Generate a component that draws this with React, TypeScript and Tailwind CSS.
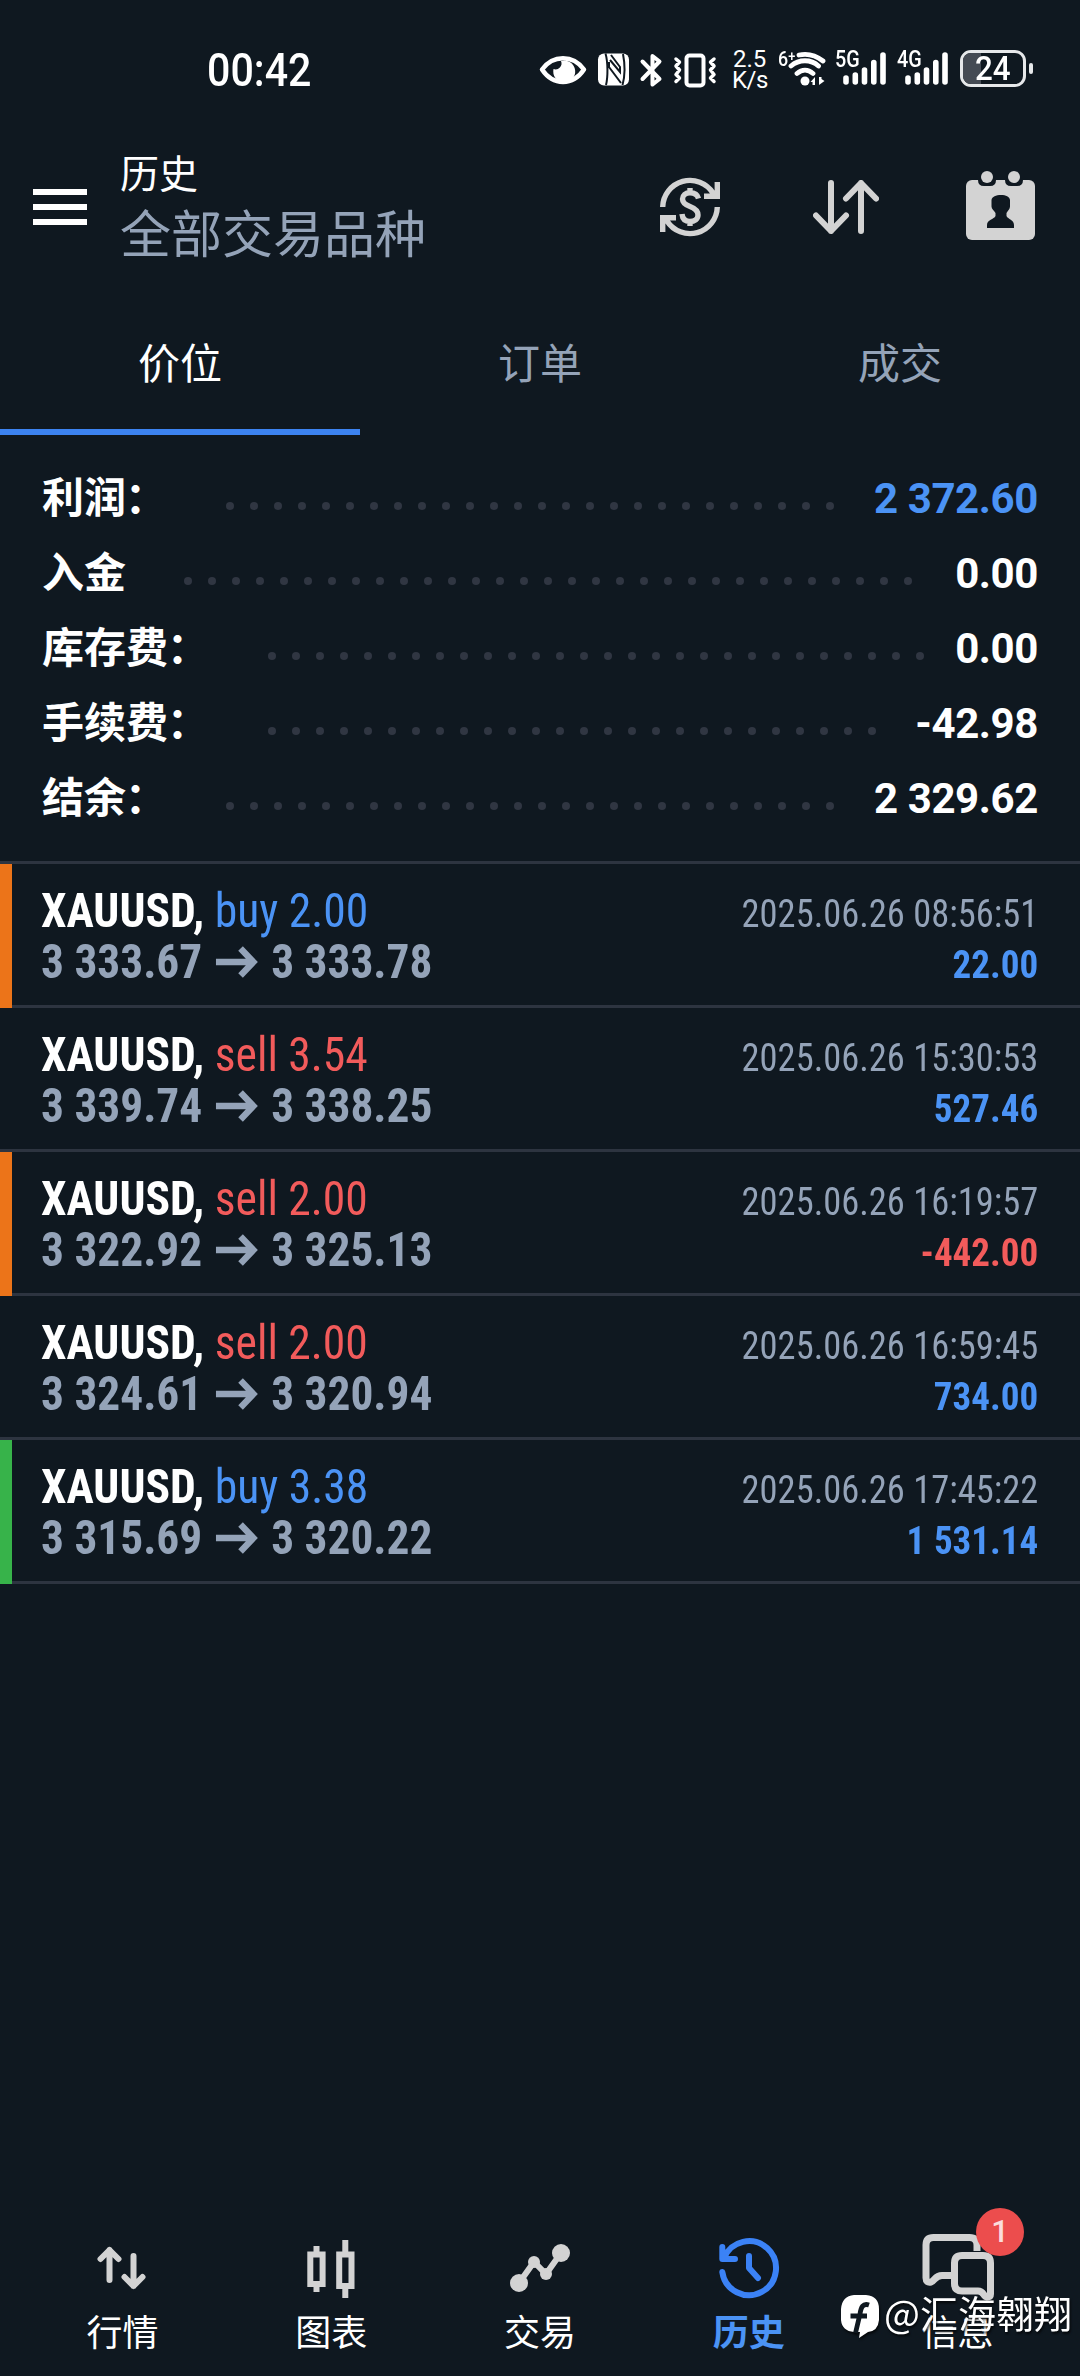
import type { ReactNode } from "react";

const CJK = "font-['Roboto','Noto_Sans_CJK_SC',sans-serif]";

type Deal = {
  side: "buy" | "sell";
  volume: string;
  open: string;
  close: string;
  time: string;
  profit: string;
  loss?: boolean;
  marker?: string;
};

const deals: Deal[] = [
  { side: "buy", volume: "2.00", open: "3 333.67", close: "3 333.78", time: "2025.06.26 08:56:51", profit: "22.00", marker: "bg-[#ec7419]" },
  { side: "sell", volume: "3.54", open: "3 339.74", close: "3 338.25", time: "2025.06.26 15:30:53", profit: "527.46" },
  { side: "sell", volume: "2.00", open: "3 322.92", close: "3 325.13", time: "2025.06.26 16:19:57", profit: "-442.00", loss: true, marker: "bg-[#ec7419]" },
  { side: "sell", volume: "2.00", open: "3 324.61", close: "3 320.94", time: "2025.06.26 16:59:45", profit: "734.00" },
  { side: "buy", volume: "3.38", open: "3 315.69", close: "3 320.22", time: "2025.06.26 17:45:22", profit: "1 531.14", marker: "bg-[#37b34a]" },
];

const summary = [
  { label: "利润", colon: true, dots: 26, value: "2 372.60", color: "text-[#4b93f5]" },
  { label: "入金", colon: false, dots: 31, value: "0.00", color: "text-white" },
  { label: "库存费", colon: true, dots: 28, value: "0.00", color: "text-white" },
  { label: "手续费", colon: true, dots: 26, value: "-42.98", color: "text-white" },
  { label: "结余", colon: true, dots: 26, value: "2 329.62", color: "text-white" },
];

function SignalBars({ label }: { label: string }) {
  return (
    <div className="relative h-[36px] w-[52px]">
      <span className="absolute -left-px top-px origin-left scale-x-[0.86] text-[23px] font-medium leading-[18px]">{label}</span>
      <svg className="absolute left-[7px] top-[1px]" width="44" height="35" viewBox="0 0 44 35" stroke="white" strokeWidth="5.6" strokeLinecap="round">
        <path d="M3 27V31M12.3 24V31M21.5 19V31M30.8 11.500V31M40 4V31" />
      </svg>
    </div>
  );
}

function StatusBar() {
  return (
    <div className="flex h-[138px] items-start pt-[50px] text-white">
      <div className="ml-[207px] w-[331px]">
        <span className="inline-block origin-left scale-x-[0.895] text-[46px] leading-[41px] font-medium">00:42</span>
      </div>
      <svg className="mt-[2px]" width="190" height="38" viewBox="0 0 190 38" fill="none" stroke="white">
        <path d="M4 17.500C15 2.500 35 2.500 46 17.500C35 34 15 34 4 17.500Z" strokeWidth="4.500" strokeLinejoin="round" />
        <path d="M23 9A11 11 0 1 1 15.500 17A6 6 0 0 0 23 9Z" fill="white" stroke="none" />
        <rect x="60" y="1.500" width="31" height="32" rx="6" fill="white" stroke="none" />
        <path d="M67.500 1.500C70 10 70 25 68 33M71 10V15L83 31M73 3L82 15V20L72 8M85 2C87 12 87 24 84.500 33" stroke="#0f1820" strokeWidth="2" />
        <path d="M104.500 9.500L121.500 27L114.500 32.500V4L121.500 9.500L104.500 27" strokeWidth="4" strokeLinejoin="round" strokeLinecap="round" />
        <rect x="148.500" y="3.500" width="17" height="30" rx="3" strokeWidth="4" />
        <path d="M138 7L141.500 10L138 14L141.500 18L138 22.500L141.500 26L138 29.500M176 7L172.500 10L176 14L172.500 18L176 22.500L172.500 26L176 29.500" strokeWidth="3.500" strokeLinecap="round" strokeLinejoin="round" />
      </svg>
      <div className="-mt-[1px] ml-[4px] w-[46px] text-[24px] leading-[21px] font-[450]">
        <div className="pl-px">2.5</div>
        <div className="tracking-[-0.5px]">K/s</div>
      </div>
      <div className="relative h-[36px] w-[58px]">
        <span className="absolute left-0 top-0 origin-left scale-x-[0.85] text-[21px] font-medium leading-[18px]">
          6<span className="relative -top-[5px] text-[15px]">+</span>
        </span>
        <svg className="absolute left-[9px] top-0" width="42" height="38" viewBox="0 0 42 38" fill="none" stroke="white" strokeWidth="4.800" strokeLinecap="round">
          <path d="M12 5C21 3 29 5.500 36 11M4 16C12 9 24 9 31.500 16M10 23.500C15 19 21 19 26 23.500" />
          <circle cx="18" cy="31" r="4.500" fill="white" stroke="none" />
          <path d="M28 27V35H25.500V32H23.500ZM32 35V27H34.500V29L37.500 31Z" fill="white" stroke="none" />
        </svg>
      </div>
      <SignalBars label="5G" />
      <div className="w-[10px]" />
      <SignalBars label="4G" />
      <div className="ml-[10px] flex items-center gap-[3px]">
        <div className="relative flex h-[37px] w-[66px] items-center justify-center overflow-hidden rounded-[11px] border-[3px] border-[#e6e8ea]">
          <div className="absolute inset-y-0 left-0 w-[18px] bg-[#454b54]" />
          <span className="relative scale-x-[0.95] text-[33px] font-medium leading-none">24</span>
        </div>
        <div className="h-[11px] w-[4px] rounded-full bg-[#e6e8ea]" />
      </div>
    </div>
  );
}

function Header() {
  return (
    <div className="flex h-[156px] text-white">
      <div className="ml-[33px] mt-[51px] flex w-[54px] flex-col gap-[9px]">
        <div className="h-[6px] bg-white" />
        <div className="h-[6px] bg-white" />
        <div className="h-[6px] bg-white" />
      </div>
      <div className="ml-[33px] mt-[9px] w-[540px]">
        <div className="text-[39px] leading-[56px]">历史</div>
        <div className="mt-[1px] text-[51px] leading-[64px] text-[#94a3b8]">全部交易品种</div>
      </div>
      <svg className="mt-[39px]" width="60" height="60" viewBox="0 0 60 60" fill="none" stroke="#d3d3d3" strokeWidth="5.400">
        <path d="M2.700 30A27.300 27.300 0 0 1 53 16L57 19M57.300 5V19.300H44" />
        <path d="M57.300 30A27.300 27.300 0 0 1 7 44L3 41M2.700 55V40.700H16" />
        <path d="M38.500 21.500C37.500 17.500 34 15.700 30 15.700C25.500 15.700 22.500 18.500 22.500 22C22.500 26.500 26.500 28.200 30 29.500C34.500 31.200 38 33.500 38 38C38 42 34.500 44.500 30 44.500C25.500 44.500 22.500 42 22 37M30 11V16M30 44V49" />
      </svg>
      <svg className="ml-[93px] mt-[42px]" width="66" height="54" viewBox="0 0 66 54" fill="none" stroke="#d3d3d3" strokeWidth="6" strokeLinecap="round" strokeLinejoin="round">
        <path d="M18 3V51M3 35.500L18 51L33 35.500M48 51V3M33 18.500L48 3L63 18.500" />
      </svg>
      <svg className="ml-[87px] mt-[33px]" width="69" height="69" viewBox="0 0 69 69" fill="#d3d3d3">
        <rect y="9" width="69" height="60" rx="6" />
        <path d="M12 8V9Q12 15 18 15H24Q30 15 30 9V8ZM39 8V9Q39 15 45 15H51Q57 15 57 9V8Z" fill="#0f1820" />
        <circle cx="21" cy="6" r="6" />
        <circle cx="48" cy="6" r="6" />
        <path d="M25.500 29C26 25.500 30 24 35 24C40 24 43.500 25.500 44 29V35.500C44 38 42 39.500 40.500 42V45C42 48.500 48 48.500 48 54V57H21V54C21 48.500 28 48.500 29.500 45V42C28 39.500 25.500 38 25.500 35.500Z" fill="#0f1820" />
      </svg>
    </div>
  );
}

function Tabs() {
  return (
    <div className="grid h-[141px] grid-cols-3 text-center text-[42px] leading-[60px] text-[#94a3b8]">
      <div className="border-b-[6px] border-[#3c83f0] pt-[41px] text-white">价位</div>
      <div className="pt-[41px]">订单</div>
      <div className="pt-[41px]">成交</div>
    </div>
  );
}

function Summary() {
  return (
    <div className="h-[429px] border-b-[3px] border-[#2d3440] px-[42px] pt-[26px] text-[42px] font-bold">
      {summary.map((row) => (
        <div key={row.label} className="flex h-[75px] items-center text-white">
          <span className="leading-[60px]">{row.label}</span>
          {row.colon && <span className="-ml-[1px] mr-[1px] leading-[60px]">：</span>}
          <div className="ml-[58px] mt-[14px] flex gap-[16px]">
            {Array.from({ length: row.dots }, (_, i) => (
              <div key={i} className="size-[8px] rounded-full bg-[#303642]" />
            ))}
          </div>
          <span className={`ml-auto leading-[60px] tracking-[-0.4px] ${row.color}`}>{row.value}</span>
        </div>
      ))}
    </div>
  );
}

function DealRow({ deal }: { deal: Deal }) {
  return (
    <div className="flex h-[144px]">
      <div className={`w-[12px] ${deal.marker ?? "border-b-[3px] border-[#2d3440]"}`} />
      <div className="flex grow justify-between border-b-[3px] border-[#2d3440] pl-[29px] pr-[42px] pt-[21px] leading-[51px] font-stretch-[75%]">
        <div className="text-[48px]">
          <div className="origin-left scale-x-[0.95] whitespace-nowrap">
            <span className="font-bold text-white">XAUUSD, </span>
            <span className={deal.side === "buy" ? "text-[#4b93f5]" : "text-[#f25b5b]"}>{deal.side} {deal.volume}</span>
          </div>
          <div className="flex origin-left scale-x-[0.945] items-center font-bold text-[#94a3b8]">
            <span>{deal.open}</span>
            <svg className="ml-[14px] mr-[14px] w-[45px]" height="32" viewBox="0 0 43 32" preserveAspectRatio="none" fill="none" stroke="currentColor" strokeWidth="6.500">
              <path d="M0 16H39M25 2.500L38 16L25 29.500" />
            </svg>
            <span>{deal.close}</span>
          </div>
        </div>
        <div className="pt-[4px] text-right text-[39px]">
          <div className="origin-right scale-x-[0.935] text-[#94a3b8]">{deal.time}</div>
          <div className={`origin-right scale-x-[0.95] font-bold ${deal.loss ? "text-[#f25b5b]" : "text-[#4b93f5]"}`}>{deal.profit}</div>
        </div>
      </div>
    </div>
  );
}

function NavItem({ label, active, children }: { label: string; active?: boolean; children: ReactNode }) {
  return (
    <div className={`flex flex-1 flex-col items-center ${active ? "font-bold text-[#4b93f5]" : "text-white"}`}>
      <svg width="72" height="72" viewBox="0 0 72 72" fill="none" stroke={active ? "#3b82f6" : "#d3d3d3"} strokeWidth="6" className="overflow-visible">
        {children}
      </svg>
      <div className="mt-[5px] text-[36px] leading-[50px]">{label}</div>
    </div>
  );
}

function BottomNav() {
  return (
    <div className="relative flex h-[144px] px-[18px]">
      <NavItem label="行情">
        <path d="M23.500 48V18M14.500 27L23.500 18L32.500 27M47.500 24V54M38.500 45L47.500 54L56.500 45" strokeLinecap="round" strokeLinejoin="round" />
      </NavItem>
      <NavItem label="图表">
        <path d="M15.300 22.500H27.600V52H15.300ZM21.500 14V20M21.500 54V60M44.200 22.500H56.500V54H44.200ZM50.300 8V20M50.300 56V66" />
      </NavItem>
      <NavItem label="交易">
        <path d="M15 51L30 30L42 42L57 21" />
        <g fill="#d3d3d3" stroke="none">
          <circle cx="15" cy="51" r="9" />
          <circle cx="30" cy="30" r="6" />
          <circle cx="42" cy="42" r="6" />
          <circle cx="57" cy="21" r="9" />
        </g>
      </NavItem>
      <NavItem label="历史" active>
        <path d="M9.300 40A27 27 0 1 0 11 26M9.300 15V27H22M36 24V36L45 46" strokeLinecap="round" strokeLinejoin="round" />
      </NavItem>
      <NavItem label="信息">
        <path d="M55 19V13Q55 5.500 47.500 5.500H11.500Q4 5.500 4 13V46Q4 51 9 50C13 48.500 13 43.500 20 43.500H29" strokeWidth="7" />
        <path d="M40 23.500H61Q68.500 23.500 68.500 31V62Q68.500 65 65 65C61 64.500 62 59 56 59H40Q32.500 59 32.500 51.500V31Q32.500 23.500 40 23.500Z" strokeWidth="7" />
      </NavItem>
      <div className="absolute left-[976px] top-[-24px] flex size-[48px] items-center justify-center rounded-full bg-[#ec4d4d] text-[31px] font-medium text-[#fbdcdc]">1</div>
      <div className="absolute left-[841px] top-[60px] flex items-center gap-[5px] whitespace-nowrap text-[38px] leading-[44px] text-white drop-shadow-[1px_2px_1px_rgba(0,0,0,0.7)]">
        <svg width="38" height="46" viewBox="0 0 38 46">
          <path d="M13 3H25Q38 4 38 17V28Q37 39 27 40L18 46L19 40H13Q1 39 0 28V17Q1 4 13 3Z" fill="white" />
          <path d="M28 13C22 11 20 15 19 22L14.500 41M9.500 24H26" fill="none" stroke="#0f1820" strokeWidth="4.800" />
        </svg>
        <span className="-mt-[6px] font-['Noto_Sans_CJK_SC',sans-serif]">@汇海翱翔</span>
      </div>
    </div>
  );
}

export default function App() {
  return (
    <div className={`flex h-[2376px] w-[1080px] flex-col overflow-hidden bg-[#0f1820] ${CJK}`}>
      <StatusBar />
      <Header />
      <Tabs />
      <Summary />
      <div className="grow">
        {deals.map((deal) => (
          <DealRow key={deal.time} deal={deal} />
        ))}
      </div>
      <BottomNav />
    </div>
  );
}
